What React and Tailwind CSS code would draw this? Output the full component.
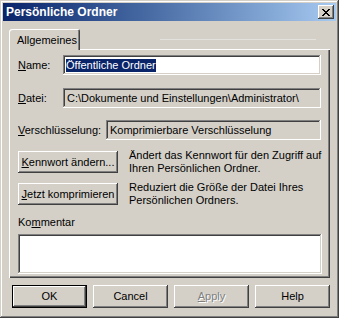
import React from 'react';

const raised =
  'shadow-[inset_-1px_-1px_#404040,inset_1px_1px_#ffffff,inset_-2px_-2px_#808080,inset_2px_2px_#d4d0c8]';
const sunken =
  'shadow-[inset_-1px_-1px_#ffffff,inset_1px_1px_#808080,inset_-2px_-2px_#d4d0c8,inset_2px_2px_#404040]';

function Key({ children }) {
  return <span className="underline underline-offset-[1px]">{children}</span>;
}

function Button({ children, className = '', isDefault = false, disabled = false }) {
  return (
    <button
      type="button"
      className={`flex items-center justify-center shrink-0 bg-[#d4d0c8] ${raised} ${
        isDefault ? 'border border-black' : ''
      } ${disabled ? 'text-[#808080] [text-shadow:1px_1px_0_#ffffff]' : 'text-black'} ${className}`}
    >
      {children}
    </button>
  );
}

function CloseIcon() {
  return (
    <svg width="8" height="7" viewBox="0 0 8 7" shapeRendering="crispEdges">
      <path
        d="M0 0h2v1H0zM6 0h2v1H6zM1 1h2v1H1zM5 1h2v1H5zM2 2h4v1H2zM3 3h2v1H3zM2 4h4v1H2zM1 5h2v1H1zM5 5h2v1H5zM0 6h2v1H0zM6 6h2v1H6z"
        fill="#000"
      />
    </svg>
  );
}

export default function App() {
  return (
    <div
      className={`w-[339px] h-[318px] p-[3px] flex flex-col bg-[#d4d0c8] text-[11px] leading-[13px] text-black font-[family-name:Liberation_Sans,Arial,sans-serif] shadow-[inset_-1px_-1px_#404040,inset_1px_1px_#d4d0c8,inset_-2px_-2px_#808080,inset_2px_2px_#ffffff]`}
    >
      {/* title bar */}
      <div className="h-[18px] flex items-center justify-between pl-[3px] pr-[2px] bg-gradient-to-r from-[#0a246a] to-[#a6caf0]">
        <span className="font-bold text-white text-[12px]">Persönliche Ordner</span>
        <div className={`w-[16px] h-[14px] flex items-center justify-center bg-[#d4d0c8] ${raised}`}>
          <CloseIcon />
        </div>
      </div>

      <div className="flex-1 flex flex-col px-[6px] pt-[8px]">
        {/* tab strip */}
        <div className="flex h-[20px] relative z-10">
          <div className="w-[71px] h-[21px] flex items-center pl-[8px] pt-[1px] bg-[#d4d0c8] rounded-tl-[3px] rounded-tr-[2px] shadow-[inset_1px_1px_#ffffff,inset_-1px_0_#404040,inset_-2px_0_#808080]">
            Allgemeines
          </div>
          <div className="flex-1 pt-[10px] pl-[80px] pr-[14px]">
            <div className="h-px bg-[#e4e2dc]" />
          </div>
        </div>

        {/* panel */}
        <div className="h-[229px] flex flex-col px-[9px] pt-[6px] shadow-[inset_1px_1px_#ffffff,inset_-1px_-1px_#404040,inset_-2px_-2px_#808080]">
          <div className="flex items-center h-[20px]">
            <span className="w-[45px]">
              <Key>N</Key>ame:
            </span>
            <div className={`flex-1 h-[20px] flex items-center px-[3px] bg-white ${sunken}`}>
              <span className="bg-[#0a246a] text-white">Öffentliche Ordner</span>
            </div>
          </div>

          <div className="flex items-center h-[20px] mt-[13px]">
            <span className="w-[45px]">
              <Key>D</Key>atei:
            </span>
            <div className={`flex-1 h-[20px] flex items-center px-[4px] bg-[#d4d0c8] ${sunken}`}>
              C:\Dokumente und Einstellungen\Administrator\
            </div>
          </div>

          <div className="flex items-center h-[20px] mt-[12px]">
            <span className="w-[88px]">
              <Key>V</Key>erschlüsselung:
            </span>
            <div className={`flex-1 h-[20px] flex items-center px-[4px] bg-[#d4d0c8] ${sunken}`}>
              Komprimierbare Verschlüsselung
            </div>
          </div>

          <div className="flex items-center mt-[9px] h-[26px]">
            <Button className="w-[100px] h-[22px]">
              <span>
                <Key>K</Key>ennwort ändern...
              </span>
            </Button>
            <p className="ml-[11px] whitespace-nowrap">
              Ändert das Kennwort für den Zugriff auf
              <br />
              Ihren Persönlichen Ordner.
            </p>
          </div>

          <div className="flex items-center mt-[6px] h-[26px]">
            <Button className="w-[100px] h-[22px]">
              <span>
                <Key>J</Key>etzt komprimieren
              </span>
            </Button>
            <p className="ml-[11px] whitespace-nowrap">
              Reduziert die Größe der Datei Ihres
              <br />
              Persönlichen Ordners.
            </p>
          </div>

          <div className="mt-[9px] h-[14px]">
            Ko<Key>m</Key>mentar
          </div>
          <div className={`mt-[4px] h-[40px] mr-[-1px] bg-white ${sunken}`} />
        </div>

        {/* dialog buttons */}
        <div className="flex gap-[6px] pl-[3px] mt-[7px]">
          <Button isDefault className="w-[75px] h-[23px]">
            OK
          </Button>
          <Button className="w-[75px] h-[23px]">Cancel</Button>
          <Button disabled className="w-[75px] h-[23px]">
            <span>
              <Key>A</Key>pply
            </span>
          </Button>
          <Button className="w-[75px] h-[23px]">Help</Button>
        </div>
      </div>
    </div>
  );
}
